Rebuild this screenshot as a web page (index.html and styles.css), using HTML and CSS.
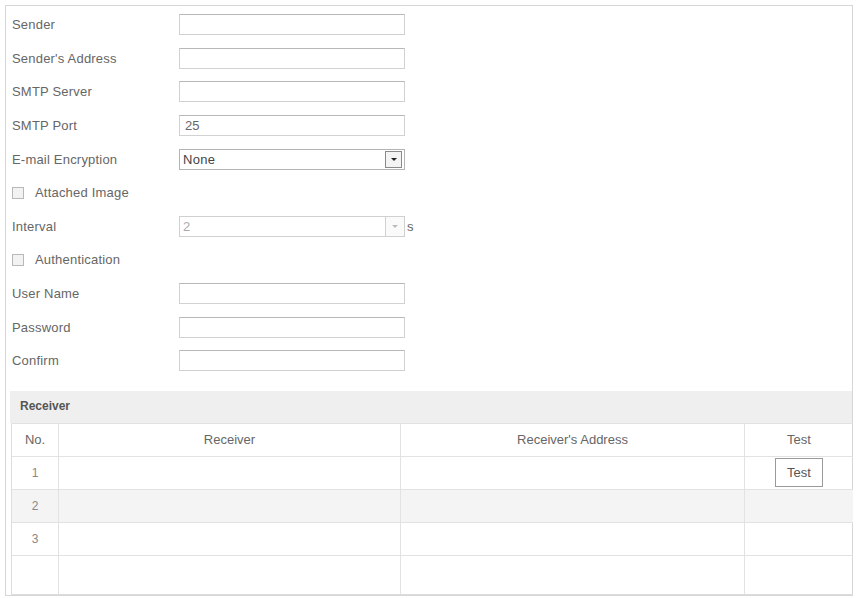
FILE: index.html
```html
<!DOCTYPE html>
<html lang="en">
<head>
    <meta charset="UTF-8">
    <title>Email</title>
    <link rel="stylesheet" href="styles.css">
</head>
<body>
    <div class="frame">
        <div class="form">
            <div class="row">
                <label class="label">Sender</label>
                <input type="text" class="field">
            </div>
            <div class="row">
                <label class="label">Sender's Address</label>
                <input type="text" class="field">
            </div>
            <div class="row">
                <label class="label">SMTP Server</label>
                <input type="text" class="field">
            </div>
            <div class="row">
                <label class="label">SMTP Port</label>
                <input type="text" class="field" value="25">
            </div>
            <div class="row">
                <label class="label">E-mail Encryption</label>
                <div class="select">
                    <span class="select-text">None</span>
                    <span class="select-arrow"><i></i></span>
                </div>
            </div>
            <div class="row">
                <span class="check"></span>
                <span class="check-label">Attached Image</span>
            </div>
            <div class="row">
                <label class="label">Interval</label>
                <div class="select disabled">
                    <span class="select-text">2</span>
                    <span class="select-arrow"><i></i></span>
                </div>
                <span class="unit">s</span>
            </div>
            <div class="row">
                <span class="check"></span>
                <span class="check-label">Authentication</span>
            </div>
            <div class="row">
                <label class="label">User Name</label>
                <input type="text" class="field">
            </div>
            <div class="row">
                <label class="label">Password</label>
                <input type="password" class="field">
            </div>
            <div class="row">
                <label class="label">Confirm</label>
                <input type="password" class="field">
            </div>
        </div>

        <div class="receiver">
            <div class="receiver-title">Receiver</div>
            <table class="grid">
                <tr class="head">
                    <td class="col-no">No.</td>
                    <td class="col-name">Receiver</td>
                    <td class="col-addr">Receiver's Address</td>
                    <td class="col-test">Test</td>
                </tr>
                <tr>
                    <td class="num">1</td>
                    <td></td>
                    <td></td>
                    <td class="col-test"><button class="test-btn">Test</button></td>
                </tr>
                <tr class="alt">
                    <td class="num">2</td>
                    <td></td>
                    <td></td>
                    <td></td>
                </tr>
                <tr>
                    <td class="num">3</td>
                    <td></td>
                    <td></td>
                    <td></td>
                </tr>
                <tr class="last">
                    <td></td>
                    <td></td>
                    <td></td>
                    <td></td>
                </tr>
            </table>
        </div>
    </div>
</body>
</html>
```

FILE: styles.css
```css
body {
    margin: 0;
    background: #fff;
    font-family: "Liberation Sans", Arial, sans-serif;
    font-size: 13px;
    color: #666;
}
.frame {
    margin: 5px 0 0 5px;
    width: 846px;
    height: 589px;
    border: 1px solid #d6d6d6;
    display: flex;
    flex-direction: column;
}
.form {
    padding: 2px 0 0 6px;
}
.row {
    height: 33.6px;
    display: flex;
    align-items: center;
}
.label {
    width: 167px;
    letter-spacing: 0.2px;
}
.field {
    width: 226px;
    height: 21px;
    margin: 0;
    padding: 0 5px;
    box-sizing: border-box;
    border: 1px solid #d2d2d2;
    border-top-color: #b8b8b8;
    font-family: inherit;
    font-size: 13px;
    color: #666;
    outline: none;
}
.select {
    width: 226px;
    height: 21px;
    box-sizing: border-box;
    border: 1px solid #b4b4b4;
    display: flex;
    align-items: center;
    justify-content: space-between;
    padding-left: 3px;
}
.select-text {
    color: #444;
    letter-spacing: 0.3px;
}
.select-arrow {
    width: 15px;
    height: 15px;
    margin-right: 2px;
    border: 1px solid #8a8a8a;
    background: #f4f4f4;
    display: flex;
    align-items: center;
    justify-content: center;
}
.select-arrow i {
    width: 0;
    height: 0;
    border-left: 3px solid transparent;
    border-right: 3px solid transparent;
    border-top: 3px solid #222;
}
.select.disabled {
    border-color: #d0d0d0;
}
.select.disabled .select-text {
    color: #aaa;
}
.select.disabled .select-arrow {
    width: 18px;
    height: 19px;
    margin-right: 0;
    border: none;
    border-left: 1px solid #d0d0d0;
    background: #fafafa;
}
.select.disabled .select-arrow i {
    border-top-color: #bbb;
}
.unit {
    margin-left: 2px;
}
.check {
    width: 10px;
    height: 10px;
    border: 1px solid #b8b8b8;
    background: #f2f2f2;
    margin-right: 11px;
}
.check-label {
    letter-spacing: 0.2px;
}
.receiver {
    margin: 13px 0 0 4px;
    flex: 1;
    display: flex;
    flex-direction: column;
}
.receiver-title {
    height: 32px;
    line-height: 31px;
    background: #efefef;
    padding-left: 10px;
    font-weight: bold;
    font-size: 12px;
    color: #555;
}
.grid {
    flex: 1;
    width: 100%;
    border-collapse: collapse;
    margin-left: 1px;
    border-left: 1px solid #ddd;
}
.grid td {
    height: 32px;
    padding: 0;
    border-top: 1px solid #e2e2e2;
    border-right: 1px solid #e2e2e2;
    text-align: center;
}
.grid td:last-child {
    border-right: none;
}
.grid .last td {
    height: auto;
    border-bottom: 1px solid #ddd;
}
.col-no {
    width: 46px;
}
.col-name {
    width: 341px;
}
.col-addr {
    width: 343px;
}
.num {
    color: #888;
    font-size: 12px;
}
.alt td {
    background: #f4f4f4;
}
.test-btn {
    width: 48px;
    height: 29px;
    background: #fff;
    border: 1px solid #9a9a9a;
    font-family: inherit;
    font-size: 13px;
    color: #555;
    padding: 0;
}
```
